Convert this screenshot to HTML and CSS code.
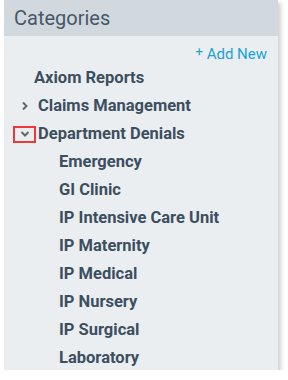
FILE: index.html
```html
<!DOCTYPE html>
<html lang="en">
<head>
    <meta charset="UTF-8">
    <title>Categories</title>
    <link rel="stylesheet" href="styles.css">
</head>
<body>

    <!-- Categories panel -->
    <section class="panel">
        <div class="panel-head">Categories</div>
        <div class="panel-body">
            <div class="add-row">
                <a href="#" class="add-new"><span class="plus">+</span> Add New</a>
            </div>
            <ul class="tree">
                <li class="node leaf"><span class="toggle"></span>Axiom Reports</li>
                <li class="node">
                    <span class="toggle">
                        <svg width="8" height="10" viewBox="0 0 8 10"><path d="M2 1.5 L5.5 5 L2 8.5" fill="none" stroke="#666" stroke-width="2"/></svg>
                    </span>Claims Management
                </li>
                <li class="node">
                    <span class="toggle marked">
                        <svg width="10" height="8" viewBox="0 0 10 8"><path d="M1.5 2 L5 5.5 L8.5 2" fill="none" stroke="#666" stroke-width="2"/></svg>
                    </span>Department Denials
                </li>
                <li class="child">Emergency</li>
                <li class="child">GI Clinic</li>
                <li class="child">IP Intensive Care Unit</li>
                <li class="child">IP Maternity</li>
                <li class="child">IP Medical</li>
                <li class="child">IP Nursery</li>
                <li class="child">IP Surgical</li>
                <li class="child">Laboratory</li>
            </ul>
        </div>
    </section>

</body>
</html>
```

FILE: styles.css
```css
/* Global Styles */
* {
    margin: 0;
    padding: 0;
    box-sizing: border-box;
}

body {
    font-family: Roboto, 'Liberation Sans', sans-serif;
    background-color: #fff;
    padding-left: 4px;
}

.panel {
    width: 274px;
    height: 370px;
    background-color: #eaeef1;
    box-shadow: 3px 3px 4px rgba(0, 0, 0, 0.18);
}

.panel-head {
    height: 36px;
    background-color: #d1d9df;
    color: #475767;
    font-size: 20px;
    line-height: 36px;
    padding-left: 10px;
}

.panel-body {
    padding: 6px 11px 0 9px;
}

.add-row {
    display: flex;
    justify-content: flex-end;
    height: 20px;
}

.add-new {
    color: #1ba2d2;
    font-size: 15px;
    line-height: 20px;
    text-decoration: none;
}

.add-new .plus {
    font-size: 13px;
    vertical-align: 3px;
}

.tree {
    list-style: none;
    margin-top: 2px;
}

.tree li {
    height: 28px;
    line-height: 28px;
    font-size: 16.5px;
    font-weight: 700;
    color: #3c4e60;
    display: flex;
    align-items: center;
}

.toggle {
    width: 23px;
    height: 17px;
    margin-right: 2px;
    display: flex;
    align-items: center;
    justify-content: center;
}

.leaf .toggle {
    width: 19px;
}

.toggle.marked {
    border: 2px solid #ec3a3a;
}

.tree .child {
    padding-left: 46px;
}
```
